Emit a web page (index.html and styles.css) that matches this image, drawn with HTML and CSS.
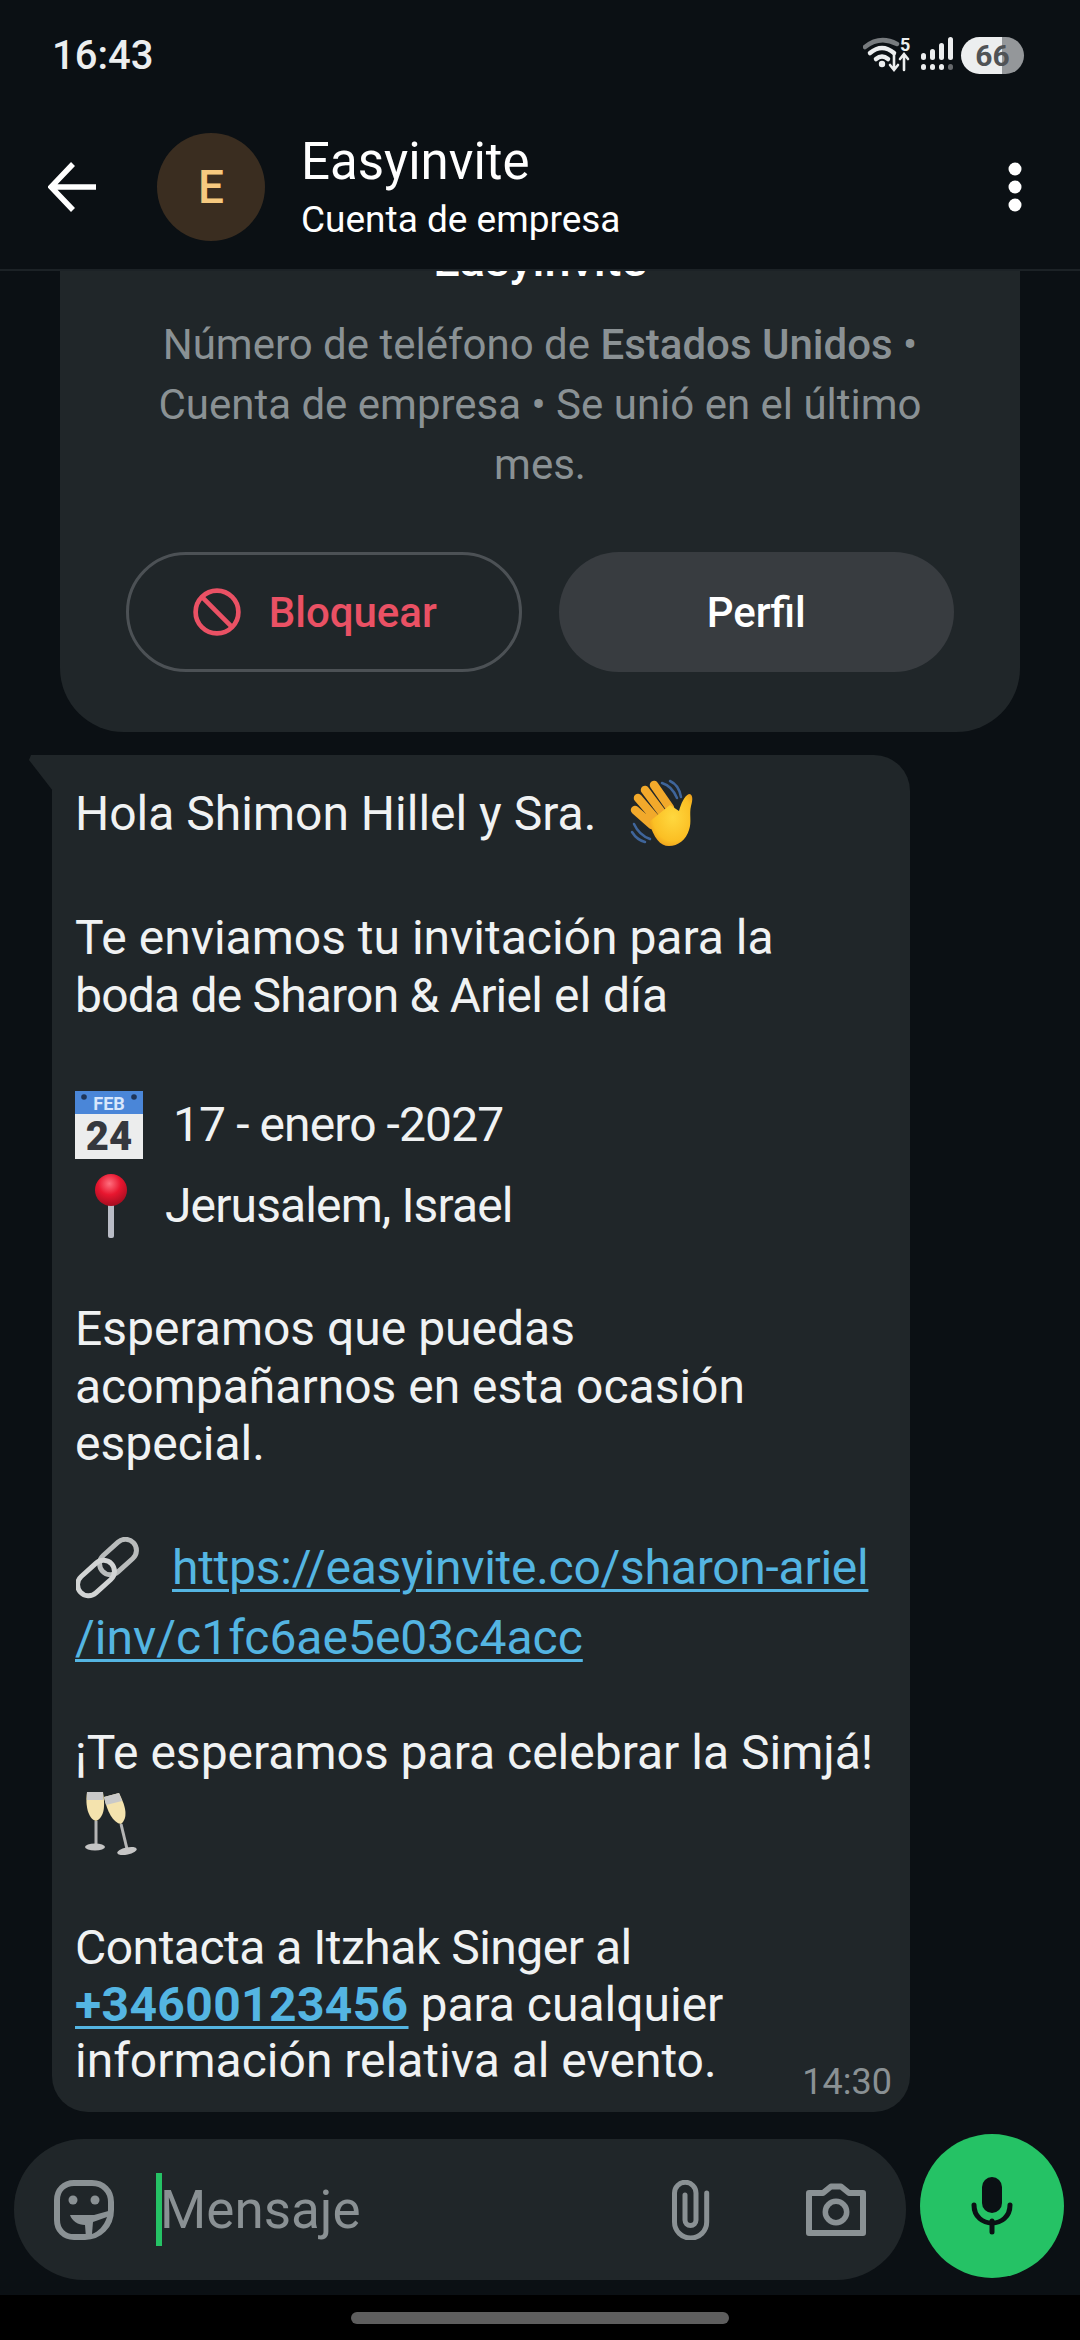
FILE: index.html
```html
<!DOCTYPE html>
<html lang="es">
<head>
  <meta charset="UTF-8" />
  <meta name="viewport" content="width=device-width, initial-scale=1" />
  <title>Easyinvite</title>
  <link rel="stylesheet" href="styles.css">
</head>
<body>
<div class="screen">

  <!-- Status bar -->
  <div class="status">
    <span class="clock">16:43</span>
    <div class="status-icons">
      <svg width="48" height="48" viewBox="0 0 48 48" fill="none" stroke-linecap="round">
        <path d="M2 16 Q17 4 34 13" stroke="#777b7e" stroke-width="4.500"/>
        <path d="M7 22 Q19 12 31 22" stroke="#eceeef" stroke-width="4.500"/>
        <path d="M13 28 Q19 23 25 28" stroke="#eceeef" stroke-width="4.500"/>
        <circle cx="19" cy="33" r="3.200" fill="#eceeef"/>
        <path d="M31 23 V38 M27 34 L31 39 L35 34" stroke="#eceeef" stroke-width="2.600"/>
        <path d="M41 39 V24 M37 28 L41 23 L45 28" stroke="#eceeef" stroke-width="2.600"/>
      </svg>
      <span class="five">5</span>
      <svg class="signal" width="36" height="36" viewBox="0 0 36 36" fill="#eceeef">
        <rect x="0" y="16" width="5" height="7" rx="2.500"/>
        <rect x="9" y="12" width="5" height="11" rx="2.500"/>
        <rect x="18" y="6" width="5" height="17" rx="2.500"/>
        <rect x="27" y="0" width="5" height="23" rx="2.500"/>
        <rect x="0" y="27" width="5" height="6" rx="2.500"/>
        <rect x="9" y="27" width="5" height="6" rx="2.500"/>
        <rect x="18" y="27" width="5" height="6" rx="2.500"/>
        <rect x="27" y="27" width="5" height="6" rx="2.500" fill="#66696c"/>
      </svg>
      <span class="battery">66</span>
    </div>
  </div>

  <!-- Top bar -->
  <header class="topbar">
    <svg class="back" width="50" height="50" viewBox="0 0 50 50" fill="none" stroke="#fff" stroke-width="5.500">
      <path d="M48 25 H4 M25 2 L3 25 L25 48"/>
    </svg>
    <div class="avatar">E</div>
    <div class="who">
      <div class="who-name">Easyinvite</div>
      <div class="who-sub">Cuenta de empresa</div>
    </div>
    <svg class="more" width="14" height="50" viewBox="0 0 14 50" fill="#fff">
      <circle cx="7" cy="7" r="6.500"/>
      <circle cx="7" cy="25" r="6.500"/>
      <circle cx="7" cy="43" r="6.500"/>
    </svg>
  </header>

  <!-- Chat -->
  <main class="chat">
    <section class="card">
      <h2 class="card-name">Easyinvite</h2>
      <p class="card-text">Número de teléfono de <b>Estados Unidos</b> •<br>Cuenta de empresa • Se unió en el último<br>mes.</p>
      <div class="card-buttons">
        <button class="btn btn-block">
          <svg width="48" height="48" viewBox="0 0 46 46" fill="none" stroke="#ea5164" stroke-width="4.500">
            <circle cx="23" cy="23" r="20.500"/>
            <path d="M9 9 L37 37"/>
          </svg>
          Bloquear
        </button>
        <button class="btn btn-profile">Perfil</button>
      </div>
    </section>

    <article class="bubble">
      <div class="tail"></div>

      <p class="para para-hello">Hola Shimon Hillel y Sra.
        <svg class="emoji wave" width="72" height="72" viewBox="24 8 72 72">
          <defs>
            <radialGradient id="palm" cx="55%" cy="45%" r="65%">
              <stop offset="0" stop-color="#ffd83f"/>
              <stop offset="0.7" stop-color="#fbbf24"/>
              <stop offset="1" stop-color="#e8951a"/>
            </radialGradient>
          </defs>
          <path d="M60 13 Q70 16 75 28 M68 11 Q77 15 79 27 M32 54 Q37 65 48 69 M30 62 Q35 70 43 72" fill="none" stroke="#3f659a" stroke-width="2.500" stroke-linecap="round"/>
          <path d="M52 15 L68 38 M43 20 L61 44 M36 28 L54 49 M33 40 L50 55" fill="none" stroke="#f2a92b" stroke-width="8.500" stroke-linecap="round"/>
          <path d="M47 52 L68 35 L77 41 C79 34 82 26 87 24 C91 24 91 30 89 36 C87 44 90 52 87 60 C84 70 76 76 67 76 C58 76 52 68 47 52 Z" fill="url(#palm)"/>
        </svg>
      </p>

      <p class="para para-invite">Te enviamos tu invitación para la<br><span class="tight-names">boda de Sharon &amp; Ariel</span> el día</p>

      <div class="para-event">
        <div class="event-row">
          <svg class="emoji" width="68" height="68" viewBox="0 0 68 68">
            <rect width="68" height="68" fill="#eceded"/>
            <rect width="68" height="23" fill="#4a86d8"/>
            <circle cx="9" cy="6" r="2.800" fill="#1f3558"/>
            <circle cx="59" cy="6" r="2.800" fill="#1f3558"/>
            <text x="34" y="19" class="cal-month">FEB</text>
            <text x="34" y="59" class="cal-day">24</text>
          </svg>
          <span class="event-date">17 - enero -2027</span>
        </div>
        <div class="event-row event-row-place">
          <svg class="emoji pin" width="34" height="64" viewBox="0 0 34 64">
            <defs>
              <radialGradient id="pinball" cx="45%" cy="30%" r="70%">
                <stop offset="0" stop-color="#ff6f7e"/>
                <stop offset="0.5" stop-color="#e8162f"/>
                <stop offset="1" stop-color="#a50d20"/>
              </radialGradient>
            </defs>
            <rect x="14" y="28" width="6" height="36" rx="2" fill="#b9bcc6"/>
            <circle cx="17" cy="16" r="16" fill="url(#pinball)"/>
          </svg>
          <span class="event-place">Jerusalem, Israel</span>
        </div>
      </div>

      <p class="para para-hope">Esperamos que puedas<br>acompañarnos en esta ocasión<br>especial.</p>

      <div class="para-link">
        <svg class="emoji chain" width="66" height="64" viewBox="0 0 66 64" fill="none">
          <rect x="31" y="-1" width="22" height="42" rx="11" transform="rotate(48 42 20)" stroke="#b9bcbc" stroke-width="5"/>
          <rect x="9" y="20" width="22" height="42" rx="11" transform="rotate(48 20 41)" stroke="#d2d4d4" stroke-width="5"/>
        </svg>
        <a class="link link-first">https://easyinvite.co/sharon-ariel</a>
        <a class="link link-second">/inv/c1fc6ae5e03c4acc</a>
      </div>

      <p class="para para-celebrate">¡Te esperamos para celebrar la Simjá!</p>
      <svg class="emoji glasses" width="54" height="68" viewBox="0 0 54 68" fill="none">
        <path d="M4 1 H20 C22 14 22 26 13 30 C5 28 2 14 4 1 Z" fill="#f4e3ae"/>
        <path d="M4 1 H20 L20 9 H4 Z" fill="#c9c9c9"/>
        <path d="M13 30 V54" stroke="#b5b5b5" stroke-width="3"/>
        <ellipse cx="12" cy="56" rx="10" ry="3.500" fill="#c5c5c5"/>
        <path d="M21 6 L36 2 C42 14 46 26 38 33 C30 32 24 20 21 6 Z" fill="#f4e3ae"/>
        <path d="M21 6 L36 2 L39 10 L23 14 Z" fill="#c9c9c9"/>
        <path d="M38 33 L44 58" stroke="#b5b5b5" stroke-width="3"/>
        <ellipse cx="44" cy="60" rx="10" ry="3.500" fill="#c5c5c5" transform="rotate(-12 44 60)"/>
      </svg>

      <p class="para para-contact"><span class="tight-contact">Contacta a Itzhak Singer al</span><br><a class="link link-phone">+34600123456</a> para cualquier<br>información relativa al evento.</p>
      <span class="msg-time">14:30</span>
    </article>
  </main>

  <!-- Composer -->
  <footer class="composer">
    <div class="input-pill">
      <svg class="sticker" width="60" height="60" viewBox="0 0 60 60" fill="none" stroke="#8a9194" stroke-width="6">
        <path d="M20 3 H38 C49 3 57 11 57 22 V30 C57 46 45 57 31 57 H20 C10 57 3 50 3 40 V20 C3 10 10 3 20 3 Z"/>
        <circle cx="19" cy="20" r="4.500" fill="#8a9194" stroke="none"/>
        <circle cx="41" cy="20" r="4.500" fill="#8a9194" stroke="none"/>
        <path d="M16 35 H40 L58 30 C58 46 46 58 32 58 L31 45 C24 45 18 41 16 35 Z" fill="#8a9194" stroke="none"/>
        <path d="M39 42 L53 37 C50 46 44 52 38 54 Z" fill="#202629" stroke="none"/>
      </svg>
      <div class="caret"></div>
      <span class="placeholder">Mensaje</span>
      <svg class="clip" width="38" height="60" viewBox="0 0 38 60" fill="none" stroke="#8a9194" stroke-width="5" stroke-linecap="round">
        <path d="M34.700 13 V42 A16 16 0 0 1 2.500 42 V13 A10.750 10.750 0 0 1 24 13 V40 A5.500 5.500 0 0 1 13 40 V15"/>
      </svg>
      <svg class="camera" width="60" height="54" viewBox="0 0 60 54" fill="none" stroke="#8a9194" stroke-width="6">
        <path d="M3 10 H17 L25 3.500 H35 L43 10 H57 V50 H3 Z" stroke-linejoin="round"/>
        <circle cx="30" cy="29" r="10.700" stroke-width="5.500"/>
      </svg>
    </div>
    <button class="mic-btn">
      <svg width="42" height="58" viewBox="0 0 42 58" fill="none" stroke="#0b1014" stroke-width="5" stroke-linecap="round">
        <rect x="11" y="0" width="20" height="36" rx="10" fill="#0b1014" stroke="none"/>
        <path d="M3 28 C3 52 39 52 39 28"/>
        <path d="M21 44 V55"/>
      </svg>
    </button>
  </footer>

  <!-- Nav bar -->
  <div class="navbar"><div class="home-pill"></div></div>
</div>
</body>
</html>
```

FILE: styles.css
```css
* {
  box-sizing: border-box;
}

body {
  margin: 0;
  background: #0b1014;
  font-family: Roboto, "Noto Sans", sans-serif;
  color: #fff;
}

p, h2 {
  margin: 0;
}

.screen {
  width: 1080px;
  height: 2340px;
  display: flex;
  flex-direction: column;
  overflow: hidden;
}

/* Status bar */
.status {
  height: 92px;
  flex: none;
  display: flex;
  align-items: center;
  justify-content: space-between;
  padding: 18px 56px 0 52px;
}

.clock {
  font-size: 40px;
  font-weight: 500;
  color: #eceeef;
}

.status-icons {
  display: flex;
  align-items: center;
  position: relative;
}

.five {
  position: absolute;
  left: 37px;
  top: 3px;
  font-size: 18px;
  font-weight: 700;
  color: #eceeef;
}

.signal {
  margin-left: 10px;
}

.battery {
  width: 63px;
  height: 37px;
  margin-left: 4px;
  border-radius: 19px;
  background: linear-gradient(90deg, #eceeef 65%, #94979a 65%);
  color: #505356;
  font-size: 30px;
  font-weight: 700;
  line-height: 37px;
  text-align: center;
}

/* Top bar */
.topbar {
  height: 179px;
  flex: none;
  display: flex;
  align-items: center;
  padding: 13px 58px 0 48px;
  border-bottom: 2px solid #1c2226;
}

.avatar {
  width: 108px;
  height: 108px;
  margin-left: 59px;
  border-radius: 50%;
  background: #3a2d20;
  color: #f6c97f;
  font-size: 46px;
  font-weight: 500;
  line-height: 108px;
  text-align: center;
}

.who {
  flex: 1;
  margin-left: 36px;
  margin-top: 4px;
}

.who-name {
  font-size: 51px;
  line-height: 62px;
}

.who-sub {
  font-size: 37px;
  line-height: 54px;
}

/* Chat */
.chat {
  flex: 1;
  min-height: 0;
  overflow: hidden;
}

.card {
  width: 960px;
  margin: -31px 0 0 60px;
  padding-bottom: 60px;
  background: #202629;
  border-radius: 0 0 64px 64px;
  text-align: center;
}

.card-name {
  height: 40px;
  font-size: 47px;
  font-weight: 500;
  line-height: 40px;
}

.card-text {
  margin-top: 35px;
  color: #8a9194;
  font-size: 42px;
  line-height: 60px;
}

.card-text b {
  font-weight: 500;
}

.card-buttons {
  display: grid;
  grid-template-columns: 1fr 1fr;
  gap: 37px;
  margin: 57px 66px 0;
}

.btn {
  height: 120px;
  border-radius: 60px;
  display: flex;
  align-items: center;
  justify-content: center;
  gap: 28px;
  font-family: inherit;
  font-size: 42px;
  font-weight: 500;
}

.btn-block {
  background: none;
  border: 3px solid #4c5155;
  color: #ea5164;
  padding-right: 24px;
}

.btn-profile {
  background: #383c40;
  border: none;
  color: #fff;
}

/* Message bubble */
.bubble {
  position: relative;
  width: 858px;
  height: 1357px;
  margin: 23px 0 0 52px;
  padding: 34px 23px 0;
  background: #202629;
  border-radius: 0 36px 36px 36px;
  font-size: 48px;
  line-height: 57.500px;
  color: #f0f2f3;
}

.tail {
  position: absolute;
  left: -23px;
  top: 0;
  width: 24px;
  height: 36px;
  background: #202629;
  clip-path: polygon(2px 0, 100% 0, 100% 100%, 0 5px);
}

.para-hello {
  display: flex;
  align-items: center;
  height: 50px;
  gap: 30px;
}

.emoji {
  flex: none;
}

.para-invite {
  margin-top: 70px;
}

.tight-names {
  letter-spacing: -0.8px;
}

.para-event {
  margin-top: 67px;
}

.event-row {
  display: flex;
  align-items: center;
}

.event-date {
  margin-left: 30px;
  letter-spacing: -0.9px;
}

.event-row-place {
  margin-top: 15px;
}

.pin {
  margin-left: 19px;
}

.event-place {
  margin-left: 37px;
  letter-spacing: -0.88px;
}

.cal-month {
  font-size: 18px;
  font-weight: 700;
  fill: #d8e6fb;
  text-anchor: middle;
}

.cal-day {
  font-size: 40px;
  font-weight: 900;
  fill: #35383e;
  text-anchor: middle;
}

.para-hope {
  margin-top: 62px;
}

.para-link {
  margin-top: 64px;
  position: relative;
}

.chain {
  display: block;
  position: absolute;
  left: 1px;
  top: 0;
}

.link {
  color: #54b5e2;
  text-decoration: underline;
  text-decoration-thickness: 3px;
  text-underline-offset: 5px;
}

.link-first {
  display: block;
  margin-left: 97px;
  padding-top: 2px;
  letter-spacing: -0.26px;
}

.link-second {
  display: block;
  margin-top: 13px;
}

.para-celebrate {
  margin-top: 57px;
}

.glasses {
  display: block;
  margin: 10px 0 0 8px;
}

.para-contact {
  margin-top: 61px;
  line-height: 56.500px;
}

.tight-contact {
  letter-spacing: -0.5px;
}

.link-phone {
  font-weight: 700;
  letter-spacing: 0.37px;
}

.msg-time {
  position: absolute;
  right: 18px;
  bottom: 10px;
  font-size: 36px;
  line-height: 40px;
  color: #8a9194;
}

/* Composer */
.composer {
  height: 183px;
  flex: none;
  display: flex;
  align-items: center;
  padding: 0 16px 0 14px;
  gap: 14px;
}

.input-pill {
  width: 892px;
  height: 141px;
  border-radius: 70px;
  background: #202629;
  display: flex;
  align-items: center;
  padding: 0 40px;
  margin-top: 12px;
}

.caret {
  width: 6px;
  height: 73px;
  margin-left: 42px;
  background: #25c265;
}

.placeholder {
  flex: 1;
  margin-left: -2px;
  font-size: 53px;
  color: #8a9194;
}

.clip {
  margin-right: 96px;
}

.mic-btn {
  width: 144px;
  height: 144px;
  margin-top: 5px;
  border: none;
  border-radius: 50%;
  background: #25c265;
  display: flex;
  align-items: center;
  justify-content: center;
  padding: 0;
}

/* Nav bar */
.navbar {
  height: 45px;
  flex: none;
  background: #000;
  display: flex;
  justify-content: center;
  padding-top: 17px;
}

.home-pill {
  width: 378px;
  height: 12px;
  border-radius: 6px;
  background: #5e5e5e;
}
```
